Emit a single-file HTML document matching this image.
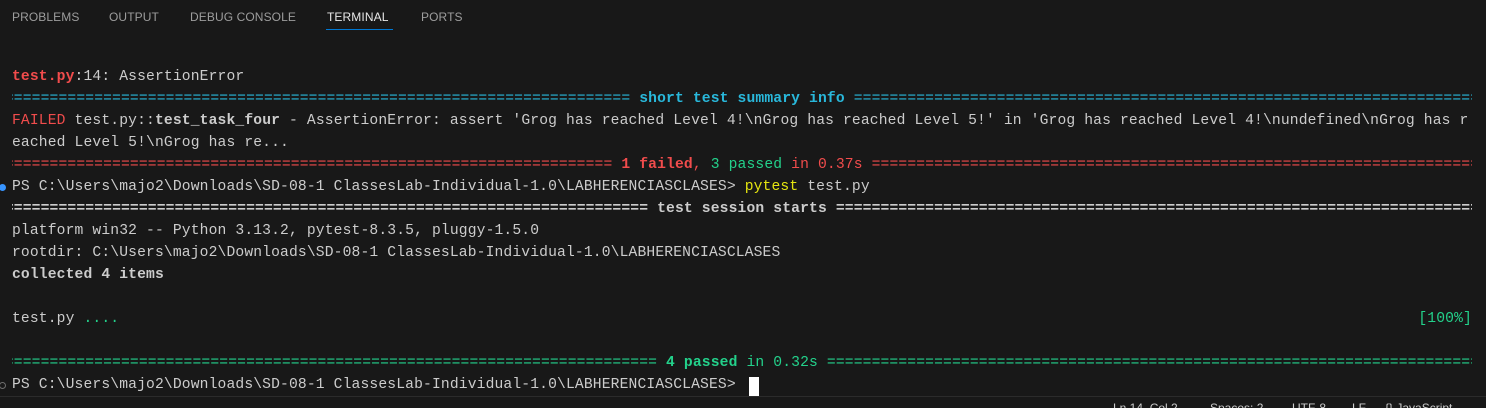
<!DOCTYPE html>
<html><head><meta charset="utf-8"><style>
html,body{margin:0;padding:0;background:#181818;width:1486px;height:408px;overflow:hidden;position:relative}
.tabs{position:absolute;top:0;left:0;right:0;height:35px;font-family:"Liberation Sans",sans-serif;font-size:12px;color:#9d9d9d}
.tabs span{position:absolute;top:10px;letter-spacing:0.1px}
.ul{position:absolute;left:326px;top:29px;width:67px;height:1px;background:#0078d4}
.t{position:absolute;left:12px;top:66px;width:1460px;margin:0;font-family:"Liberation Mono",monospace;font-size:14.67px;letter-spacing:0.14px;line-height:22px;color:#cccccc}
.l{height:22px;white-space:pre;overflow:hidden}
.f{display:flex}
.f .a{flex:1;overflow:hidden;direction:rtl;white-space:pre}
.f .c{flex:1;overflow:hidden;white-space:pre}
.f .m{white-space:pre}
.r{color:#f14c4c}.b{color:#29b8db}.g{color:#23d18b}.y{color:#e5e510}.B{font-weight:bold}
.dot{position:absolute;left:0;width:7px;height:7px;border-radius:50%}
.status{position:absolute;left:0;right:0;top:396px;height:12px;border-top:1px solid #2b2b2b;background:#181818;font-family:"Liberation Sans",sans-serif;font-size:12px;color:#cccccc}
.status span{position:absolute;top:4px}
.cur{position:absolute;left:749px;top:377px;width:10px;height:19px;background:#ffffff}
</style></head><body>
<div class="tabs">
<span style="left:12px">PROBLEMS</span>
<span style="left:109px">OUTPUT</span>
<span style="left:190px">DEBUG CONSOLE</span>
<span style="left:327px;color:#e7e7e7">TERMINAL</span>
<span style="left:421px">PORTS</span>
<div class="ul"></div>
</div>
<div class="dot" style="top:184px;left:-1px;background:#3794ff"></div>
<div class="dot" style="top:382px;left:-1px;border:1px solid #6e6e6e;width:5px;height:5px"></div>
<div class="t">
<div class="l"><span class="r B">test.py</span>:14: AssertionError</div>
<div class="l f b"><span class="a">====================================================================================================</span><span class="m B"> short test summary info </span><span class="c">====================================================================================================</span></div>
<div class="l"><span class="r">FAILED</span> test.py::<span class="B">test_task_four</span> - AssertionError: assert 'Grog has reached Level 4!\nGrog has reached Level 5!' in 'Grog has reached Level 4!\nundefined\nGrog has r</div>
<div class="l">eached Level 5!\nGrog has re...</div>
<div class="l f r"><span class="a">====================================================================================================</span><span class="m"> <span class="B">1 failed</span>, <span class="g">3 passed</span> in 0.37s </span><span class="c">====================================================================================================</span></div>
<div class="l">PS C:\Users\majo2\Downloads\SD-08-1 ClassesLab-Individual-1.0\LABHERENCIASCLASES&gt; <span class="y">pytest</span> test.py</div>
<div class="l f B"><span class="a">====================================================================================================</span><span class="m"> test session starts </span><span class="c">====================================================================================================</span></div>
<div class="l">platform win32 -- Python 3.13.2, pytest-8.3.5, pluggy-1.5.0</div>
<div class="l">rootdir: C:\Users\majo2\Downloads\SD-08-1 ClassesLab-Individual-1.0\LABHERENCIASCLASES</div>
<div class="l B">collected 4 items</div>
<div class="l"> </div>
<div class="l f">test.py <span class="g">....</span><span class="c"></span><span class="g">[100%]</span></div>
<div class="l"> </div>
<div class="l f g"><span class="a">====================================================================================================</span><span class="m"> <span class="B">4 passed</span> in 0.32s </span><span class="c">====================================================================================================</span></div>
<div class="l">PS C:\Users\majo2\Downloads\SD-08-1 ClassesLab-Individual-1.0\LABHERENCIASCLASES&gt; </div>
</div>
<div class="cur"></div>
<div class="status">
<span style="left:1113px">Ln 14, Col 2</span>
<span style="left:1210px">Spaces: 2</span>
<span style="left:1292px">UTF-8</span>
<span style="left:1352px">LF</span>
<span style="left:1385px">{} JavaScript</span>
</div>
</body></html>
